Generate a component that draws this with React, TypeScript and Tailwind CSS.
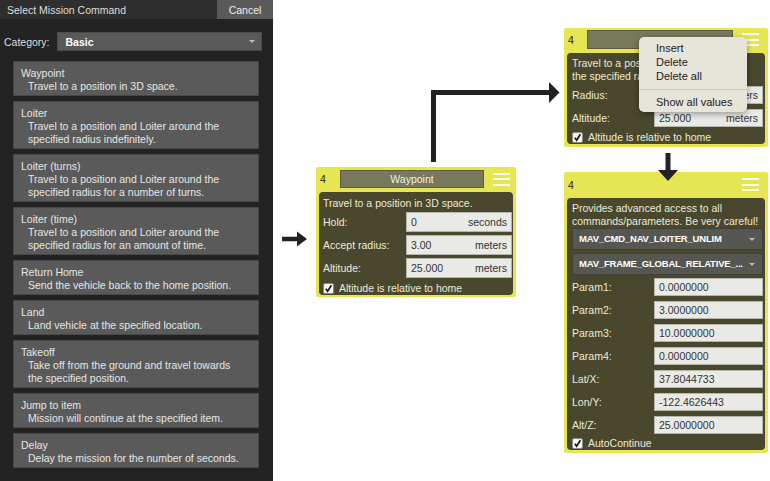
import React from "react";

type Cmd = { title: string; lines: string[] };

const commands: Cmd[] = [
  { title: "Waypoint", lines: ["Travel to a position in 3D space."] },
  { title: "Loiter", lines: ["Travel to a position and Loiter around the", "specified radius indefinitely."] },
  { title: "Loiter (turns)", lines: ["Travel to a position and Loiter around the", "specified radius for a number of turns."] },
  { title: "Loiter (time)", lines: ["Travel to a position and Loiter around the", "specified radius for an amount of time."] },
  { title: "Return Home", lines: ["Send the vehicle back to the home position."] },
  { title: "Land", lines: ["Land vehicle at the specified location."] },
  { title: "Takeoff", lines: ["Take off from the ground and travel towards", "the specified position."] },
  { title: "Jump to item", lines: ["Mission will continue at the specified item."] },
  { title: "Delay", lines: ["Delay the mission for the number of seconds."] },
];

const params: [string, string][] = [
  ["Param1:", "0.0000000"],
  ["Param2:", "3.0000000"],
  ["Param3:", "10.0000000"],
  ["Param4:", "0.0000000"],
  ["Lat/X:", "37.8044733"],
  ["Lon/Y:", "-122.4626443"],
  ["Alt/Z:", "25.0000000"],
];

function Hamburger() {
  return (
    <div className="flex w-[17px] flex-col gap-[3.5px]">
      <div className="h-[2px] bg-[#fbfbef]" />
      <div className="h-[2px] bg-[#fbfbef]" />
      <div className="h-[2px] bg-[#fbfbef]" />
    </div>
  );
}

function Check({ label, className = "" }: { label: string; className?: string }) {
  return (
    <div className={`flex h-[14px] items-center gap-[5px] ${className}`}>
      <div className="flex h-[11px] w-[11px] items-center justify-center rounded-[2px] border border-[#8a8a80] bg-[#f5f5f2]">
        <svg width="9" height="9" viewBox="0 0 9 9">
          <path d="M1.8 4.6 L3.6 7.2 L7.4 1.2" fill="none" stroke="#111" strokeWidth="1.6" />
        </svg>
      </div>
      <span className="text-[#ecebd6]">{label}</span>
    </div>
  );
}

function Field({ value, unit, h }: { value: string; unit?: string; h: string }) {
  return (
    <div className={`flex flex-1 items-center justify-between border border-[#b5b5ac] bg-[#e9e9e6] px-[4px] text-[#333] ${h}`}>
      <span>{value}</span>
      {unit && <span>{unit}</span>}
    </div>
  );
}

function Row({ label, value, unit, w, h }: { label: string; value: string; unit?: string; w: string; h: string }) {
  return (
    <div className="flex items-center">
      <span className={`shrink-0 text-[#ecebd6] ${w}`}>{label}</span>
      <Field value={value} unit={unit} h={h} />
    </div>
  );
}

function Dropdown({ text }: { text: string }) {
  return (
    <div className="flex h-[22px] items-center border border-[#404034] bg-[#575752] pl-[6px] pr-[7px]">
      <span className="min-w-0 flex-1 overflow-hidden whitespace-nowrap text-[9.5px] font-bold tracking-[-0.2px] text-white">{text}</span>
      <span className="ml-[4px] h-0 w-0 border-x-[3px] border-t-[3px] border-x-transparent border-t-[#bbb]" />
    </div>
  );
}

function CommandList() {
  return (
    <div className="flex h-[481px] w-[273px] shrink-0 flex-col bg-[#232323]">
      <div className="flex h-[19px] bg-[#2e2e2e]">
        <div className="flex flex-1 items-center pl-[7px] text-[#dedede]">Select Mission Command</div>
        <div className="flex w-[56px] items-center justify-center bg-[#5a5a5a] text-[#eee]">Cancel</div>
      </div>
      <div className="mt-[13px] flex h-[19px] items-center pl-[4px] pr-[11px]">
        <span className="text-[#dedede]">Category:</span>
        <div className="ml-[7px] flex h-full flex-1 items-center border border-[#4a4a4a] bg-[#595959] pl-[8px] pr-[6px]">
          <span className="flex-1 font-bold text-white">Basic</span>
          <span className="h-0 w-0 border-x-[3px] border-t-[3px] border-x-transparent border-t-[#bbb]" />
        </div>
      </div>
      <div className="mt-[10px] ml-[13px] mr-[14px] flex flex-col gap-[5px]">
        {commands.map((c) => (
          <div key={c.title} className="border border-[#474747] bg-[#5a5a5a] pb-[2px] pl-[7px] pt-[5px] leading-[13px] text-[#e6e6e6]">
            <div>{c.title}</div>
            {c.lines.map((l) => (
              <div key={l} className="pl-[7px]">{l}</div>
            ))}
          </div>
        ))}
      </div>
    </div>
  );
}

export default function App() {
  return (
    <div className="relative flex h-[481px] w-[770px] overflow-hidden bg-white font-['Liberation_Sans',Arial,sans-serif] text-[10.5px] leading-[14px]">
      <CommandList />

      {/* Waypoint editor */}
      <div className="absolute left-[316px] top-[167px] flex w-[200px] flex-col gap-[4px] rounded-[2px] bg-[#e6e654] px-[3px] pb-[2px] pt-[3px]">
        <div className="flex h-[18px] items-center">
          <span className="w-[21px] pl-[1px] text-[#222]">4</span>
          <div className="flex h-full w-[144px] items-center justify-center border border-[#5c5c42] bg-[#78785a] text-[#f0f0e6]">Waypoint</div>
          <div className="ml-[9px]"><Hamburger /></div>
        </div>
        <div className="flex flex-col rounded-[4px] bg-[#49472d] pl-[4px] pr-[1px] pt-[4px]">
          <div className="text-[#ecebd6]">Travel to a position in 3D space.</div>
          <div className="mt-[2px] flex flex-col gap-[3px]">
            <Row label="Hold:" value="0" unit="seconds" w="w-[83px]" h="h-[20px]" />
            <Row label="Accept radius:" value="3.00" unit="meters" w="w-[83px]" h="h-[20px]" />
            <Row label="Altitude:" value="25.000" unit="meters" w="w-[83px]" h="h-[20px]" />
          </div>
          <Check label="Altitude is relative to home" className="mt-[3px]" />
        </div>
      </div>

      {/* Loiter editor with its menu open */}
      <div className="absolute left-[564px] top-[28px] flex w-[204px] flex-col gap-[4px] rounded-[2px] bg-[#e6e654] px-[3px] pb-[3px] pt-[2px]">
        <div className="flex h-[19px] items-center">
          <span className="w-[20px] pl-[1px] text-[#222]">4</span>
          <div className="h-full w-[146px] border border-[#5c5c42] bg-[#78785a]" />
          <div className="ml-[9px]"><Hamburger /></div>
        </div>
        <div className="flex flex-col rounded-[4px] bg-[#49472d] pl-[5px] pr-[2px] pt-[4px]">
          <div className="leading-[13px] text-[#ecebd6]">Travel to a position and Loiter around the specified radius indefinitely.</div>
          <div className="mt-[3px] flex flex-col gap-[5px]">
            <Row label="Radius:" value="3.00" unit="meters" w="w-[82px]" h="h-[18px]" />
            <Row label="Altitude:" value="25.000" unit="meters" w="w-[82px]" h="h-[18px]" />
          </div>
          <Check label="Altitude is relative to home" className="mt-[3px]" />
        </div>
      </div>
      <div className="absolute left-[639px] top-[37px] w-[108px] rounded-[5px] bg-[#e7e5da] pb-[3px] pt-[4px] text-[11px] text-[#1b1b1b] shadow-[0_2px_6px_rgba(0,0,0,0.35)]">
        <div className="pl-[17px]">Insert</div>
        <div className="pl-[17px]">Delete</div>
        <div className="pl-[17px]">Delete all</div>
        <div className="mb-[5px] mt-[6px] h-px bg-[#c8c6bb]" />
        <div className="pl-[17px]">Show all values</div>
      </div>

      {/* Advanced editor */}
      <div className="absolute left-[564px] top-[172px] flex w-[204px] flex-col gap-[4px] rounded-[2px] bg-[#e6e654] px-[3px] pb-[3px] pt-[3px]">
        <div className="flex h-[19px] items-center">
          <span className="pl-[1px] text-[#222]">4</span>
          <div className="ml-auto mr-[6px]"><Hamburger /></div>
        </div>
        <div className="flex flex-col rounded-[4px] bg-[#49472d] pl-[5px] pr-[2px] pt-[4px]">
          <div className="leading-[13px] text-[#ecebd6]">
            <div>Provides advanced access to all</div>
            <div>commands/parameters. Be very careful!</div>
          </div>
          <div className="flex flex-col gap-[3px]">
            <Dropdown text="MAV_CMD_NAV_LOITER_UNLIM" />
            <Dropdown text="MAV_FRAME_GLOBAL_RELATIVE_..." />
          </div>
          <div className="mt-[3px] flex flex-col gap-[5px]">
            {params.map(([l, v]) => (
              <Row key={l} label={l} value={v} w="w-[82px]" h="h-[18px]" />
            ))}
          </div>
          <Check label="AutoContinue" className="mt-[2px]" />
        </div>
      </div>

      {/* Connector arrows */}
      <svg className="pointer-events-none absolute inset-0" width="770" height="481" viewBox="0 0 770 481">
        <line x1="282" y1="239" x2="299" y2="239" stroke="#222" strokeWidth="4.5" />
        <polygon points="297,231.5 307,239 297,246.5" fill="#222" />
        <path d="M433.5 162 V92.5 H551" fill="none" stroke="#222" strokeWidth="5" />
        <polygon points="549,82 559.5,92.5 549,103" fill="#222" />
        <line x1="668" y1="153" x2="668" y2="172" stroke="#222" strokeWidth="5" />
        <polygon points="658,170 678,170 668,181" fill="#222" />
      </svg>
    </div>
  );
}
